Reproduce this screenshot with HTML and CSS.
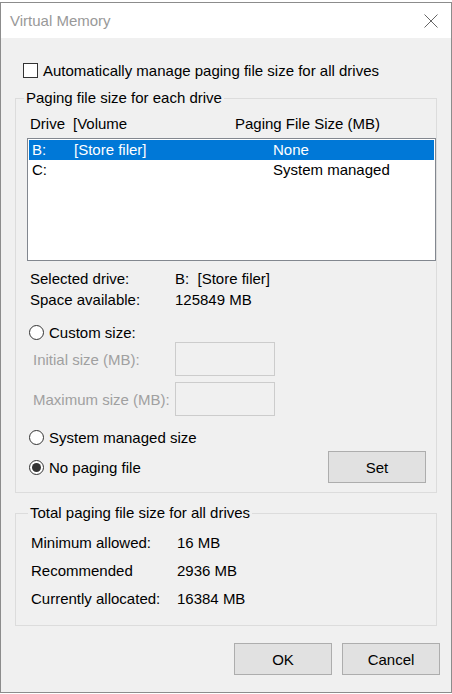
FILE: index.html
```html
<!DOCTYPE html>
<html lang="en">
<head>
  <meta charset="UTF-8">
  <meta name="viewport" content="width=device-width, initial-scale=1.0">
  <title>Virtual Memory</title>
  <link rel="stylesheet" href="styles.css">
</head>
<body>
  <div class="window">
    <div class="title-bar">
      <span class="title">Virtual Memory</span>
      <svg class="close" width="14" height="14" viewBox="0 0 14 14">
        <path d="M0.5 0.5 L13.5 13.5 M13.5 0.5 L0.5 13.5" stroke="#666" stroke-width="1" fill="none"/>
      </svg>
    </div>

    <div class="content">
      <label class="check-row">
        <span class="checkbox"></span>
        Automatically manage paging file size for all drives
      </label>

      <fieldset class="group drives">
        <legend>Paging file size for each drive</legend>

        <div class="list-head">
          <span>Drive</span>
          <span>[Volume</span>
          <span>Paging File Size (MB)</span>
        </div>

        <div class="listbox">
          <div class="list-row selected">
            <span>B:</span>
            <span>[Store filer]</span>
            <span>None</span>
          </div>
          <div class="list-row">
            <span>C:</span>
            <span></span>
            <span>System managed</span>
          </div>
        </div>

        <div class="info">
          <div class="info-row"><span>Selected drive:</span><span>B:&nbsp; [Store filer]</span></div>
          <div class="info-row"><span>Space available:</span><span>125849 MB</span></div>
        </div>

        <label class="radio-row custom">
          <span class="radio"></span>
          Custom size:
        </label>
        <div class="size-row">
          <span class="disabled">Initial size (MB):</span>
          <span class="textbox"></span>
        </div>
        <div class="size-row">
          <span class="disabled">Maximum size (MB):</span>
          <span class="textbox"></span>
        </div>

        <label class="radio-row system">
          <span class="radio"></span>
          System managed size
        </label>
        <div class="set-row">
          <label class="radio-row">
            <span class="radio checked"></span>
            No paging file
          </label>
          <button class="btn">Set</button>
        </div>
      </fieldset>

      <fieldset class="group totals">
        <legend>Total paging file size for all drives</legend>
        <div class="total-row"><span>Minimum allowed:</span><span>16 MB</span></div>
        <div class="total-row"><span>Recommended</span><span>2936 MB</span></div>
        <div class="total-row"><span>Currently allocated:</span><span>16384 MB</span></div>
      </fieldset>

      <div class="dialog-buttons">
        <button class="btn">OK</button>
        <button class="btn">Cancel</button>
      </div>
    </div>
  </div>
</body>
</html>
```

FILE: styles.css
```css
body {
  margin: 0;
  padding-top: 2px;
  background-color: #ffffff;
  font-family: "Liberation Sans", Arial, sans-serif;
  font-size: 15px;
  color: #000;
}
.window {
  width: 452px;
  height: 691px;
  box-sizing: border-box;
  border: 1px solid #8c8c8c;
  background-color: #f0f0f0;
  display: flex;
  flex-direction: column;
}
.title-bar {
  height: 35px;
  background-color: #fff;
  display: flex;
  align-items: center;
  justify-content: space-between;
  padding: 0 13px 0 9px;
}
.title {
  color: #999;
  font-size: 15px;
}
.close {
  display: block;
}
.content {
  flex: 1;
  display: flex;
  flex-direction: column;
}
.check-row {
  display: flex;
  align-items: center;
  height: 20px;
  margin: 22px 0 0 22px;
}
.checkbox {
  width: 15px;
  height: 15px;
  box-sizing: border-box;
  border: 1px solid #333;
  background-color: #fff;
  margin-right: 5px;
}
.group {
  width: 422px;
  box-sizing: border-box;
  margin: 0 0 0 14px;
  border: 1px solid #dcdcdc;
  min-width: 0;
}
.group legend {
  line-height: 20px;
  padding: 0 2px;
  margin-left: -3px;
}
.drives {
  margin-top: 8px;
  padding: 6px 0 9px 11px;
}
.list-head {
  display: grid;
  grid-template-columns: 43px 162px auto;
  height: 20px;
  line-height: 20px;
  padding-left: 3px;
}
.listbox {
  margin-top: 4px;
  height: 123px;
  box-sizing: border-box;
  border: 1px solid #82878f;
  background-color: #fff;
  padding: 1px;
}
.list-row {
  display: grid;
  grid-template-columns: 42px 199px auto;
  height: 20px;
  line-height: 20px;
  padding-left: 3px;
}
.list-row.selected {
  background-color: #0078d7;
  color: #fff;
}
.info {
  margin-top: 7px;
}
.info-row {
  display: grid;
  grid-template-columns: 145px auto;
  line-height: 21px;
  padding-left: 3px;
}
.radio-row {
  display: flex;
  align-items: center;
  height: 20px;
  padding-left: 2px;
}
.radio {
  width: 15px;
  height: 15px;
  box-sizing: border-box;
  border: 1px solid #333;
  border-radius: 50%;
  background-color: #fff;
  margin-right: 5px;
  display: flex;
  align-items: center;
  justify-content: center;
}
.radio.checked::after {
  content: "";
  width: 9px;
  height: 9px;
  border-radius: 50%;
  background-color: #333;
}
.custom {
  margin-top: 12px;
}
.size-row {
  display: flex;
  align-items: center;
  padding-left: 6px;
  margin-bottom: 6px;
}
.size-row .disabled {
  width: 142px;
  color: #a0a0a0;
}
.textbox {
  width: 100px;
  height: 34px;
  box-sizing: border-box;
  border: 1px solid #cccccc;
}
.system {
  margin-top: 11px;
}
.set-row {
  display: flex;
  align-items: center;
  justify-content: space-between;
  margin-top: 4px;
  padding-right: 10px;
}
.btn {
  width: 98px;
  height: 32px;
  box-sizing: border-box;
  border: 1px solid #adadad;
  background-color: #e1e1e1;
  font-family: inherit;
  font-size: 15px;
  color: #000;
  padding: 0;
}
.totals {
  margin-top: 10px;
  padding: 6px 0 12px 15px;
}
.total-row {
  display: grid;
  grid-template-columns: 146px auto;
  line-height: 28px;
}
.dialog-buttons {
  display: flex;
  justify-content: flex-end;
  gap: 10px;
  margin-top: 17px;
  padding-right: 11px;
}
```
